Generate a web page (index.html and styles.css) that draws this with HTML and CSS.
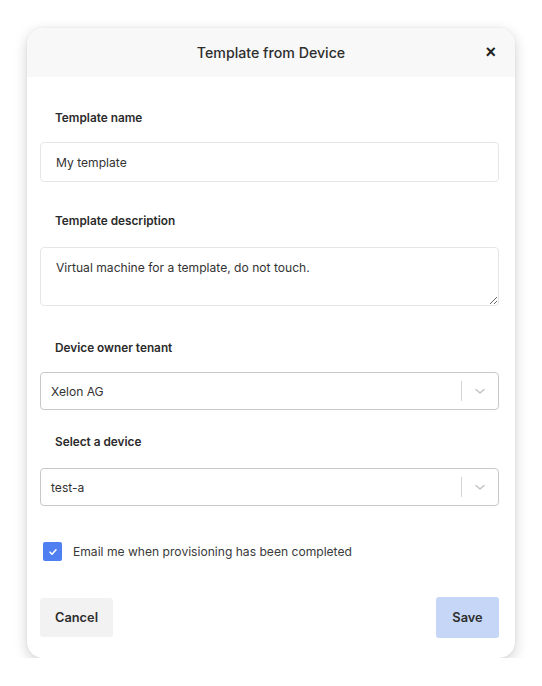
FILE: index.html
```html
<!doctype html>
<html>
    <head>
        <title>Template from Device</title>
        <link rel="stylesheet" href="styles.css">
    </head>
    <body>
        <div class="modal">
            <header class="modal-header">
                <h2>Template from Device</h2>
                <button class="close">&times;</button>
            </header>
            <form class="modal-body">
                <label class="label label-first">Template name</label>
                <input class="field" type="text" value="My template">

                <label class="label label-desc">Template description</label>
                <textarea class="field area">Virtual machine for a template, do not touch.</textarea>

                <label class="label label-tenant">Device owner tenant</label>
                <div class="select">
                    <span>Xelon AG</span>
                    <span class="sep"></span>
                    <svg width="14" height="14" viewBox="0 0 14 14"><path d="M3 5.5l4 3.5 4-3.5" fill="none" stroke="#c4c4c4" stroke-width="1.6" stroke-linecap="round" stroke-linejoin="round"/></svg>
                </div>

                <label class="label label-device">Select a device</label>
                <div class="select">
                    <span>test-a</span>
                    <span class="sep"></span>
                    <svg width="14" height="14" viewBox="0 0 14 14"><path d="M3 5.5l4 3.5 4-3.5" fill="none" stroke="#c4c4c4" stroke-width="1.6" stroke-linecap="round" stroke-linejoin="round"/></svg>
                </div>

                <label class="check">
                    <span class="box">
                        <svg width="10" height="10" viewBox="0 0 10 10"><path d="M2 5.2l2 2 4-4.4" fill="none" stroke="white" stroke-width="1.6" stroke-linecap="round" stroke-linejoin="round"/></svg>
                    </span>
                    Email me when provisioning has been completed
                </label>

                <div class="actions">
                    <button type="button" class="btn cancel">Cancel</button>
                    <button type="button" class="btn save">Save</button>
                </div>
            </form>
        </div>
    </body>
</html>
```

FILE: styles.css
```css
body {
    margin: 0;
    background: white;
    font-family: Inter, "Noto Sans", sans-serif;
    color: #333;
}

.modal {
    width: 488px;
    margin: 28px 0 0 27px;
    background: white;
    border-radius: 16px;
    overflow: hidden;
    box-shadow: 0 4px 14px rgba(0, 0, 0, 0.18), 0 0 3px rgba(0, 0, 0, 0.06);
}

.modal-header {
    position: relative;
    height: 49px;
    background: #f8f8f8;
    display: flex;
    align-items: center;
    justify-content: center;
}

.modal-header h2 {
    margin: 0;
    font-size: 14.2px;
    font-weight: 500;
    color: #2e2e2e;
}

.close {
    position: absolute;
    right: 19px;
    top: 14px;
    border: none;
    background: none;
    padding: 0;
    font-size: 18px;
    line-height: 20px;
    font-weight: 700;
    color: #222;
    cursor: pointer;
}

.modal-body {
    display: flex;
    flex-direction: column;
    padding: 32px 16px 20px 13px;
}

.label {
    font-size: 11.8px;
    font-weight: 600;
    color: #2b2b2b;
    line-height: 18px;
    padding-left: 15px;
}

.label-first {
    margin-bottom: 15px;
}

.label-desc {
    margin-top: 30px;
    margin-bottom: 17px;
}

.label-tenant {
    margin-top: 33px;
    margin-bottom: 15px;
}

.label-device {
    margin-top: 23px;
    margin-bottom: 17px;
}

.field {
    box-sizing: border-box;
    width: 100%;
    height: 40px;
    border: 1px solid #e6e6e6;
    border-radius: 4px;
    padding: 0 15px;
    font-family: inherit;
    font-size: 12.1px;
    color: #333;
    outline: none;
}

.area {
    height: 59px;
    padding: 11px 15px;
    resize: vertical;
    line-height: 18px;
}

.select {
    box-sizing: border-box;
    height: 38px;
    border: 1px solid #c9c9c9;
    border-radius: 4px;
    display: flex;
    align-items: center;
    padding: 0 11px 0 10px;
    font-size: 12.1px;
    color: #333;
}

.select span:first-child {
    flex: 1;
}

.sep {
    width: 1px;
    height: 20px;
    background: #d4d4d4;
    margin-right: 11px;
}

.check {
    display: flex;
    align-items: center;
    gap: 11px;
    margin-top: 36px;
    padding-left: 3px;
    font-size: 12.1px;
    color: #3a3a3a;
}

.box {
    width: 19px;
    height: 19px;
    border-radius: 2px;
    background: #4f7ff0;
    display: flex;
    align-items: center;
    justify-content: center;
}

.actions {
    display: flex;
    justify-content: space-between;
    align-items: center;
    margin-top: 36px;
}

.btn {
    border: none;
    border-radius: 3px;
    font-family: inherit;
    font-size: 12.8px;
    font-weight: 600;
    color: #2e2e2e;
    cursor: pointer;
}

.cancel {
    width: 73px;
    height: 39px;
    background: #f2f2f2;
}

.save {
    width: 63px;
    height: 41px;
    background: #c6d6f7;
}
```
